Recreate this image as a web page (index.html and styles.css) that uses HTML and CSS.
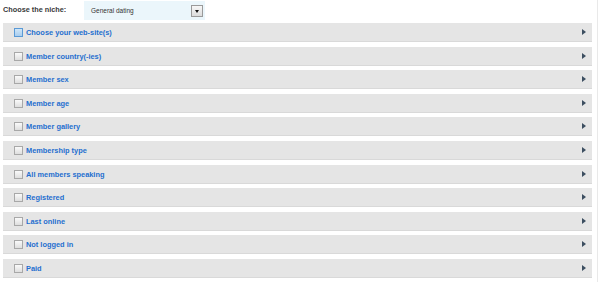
FILE: index.html
```html
<!DOCTYPE html>
<html lang="en">
<head>
    <meta charset="UTF-8">
    <title>Search</title>
    <link rel="stylesheet" href="styles.css">
</head>
<body>
<div id="search">
    <div class="niche-row">
        <label class="niche-label">Choose the niche:</label>
        <div class="niche-select">
            <span class="niche-value">General dating</span>
            <span class="niche-button"><span class="niche-arrow"></span></span>
        </div>
    </div>

    <div class="filter-list">
        <div class="filter-row">
            <span class="filter-check active"></span>
            <span class="filter-name">Choose your web-site(s)</span>
            <span class="filter-arrow"></span>
        </div>
        <div class="filter-row">
            <span class="filter-check"></span>
            <span class="filter-name">Member country(-ies)</span>
            <span class="filter-arrow"></span>
        </div>
        <div class="filter-row">
            <span class="filter-check"></span>
            <span class="filter-name">Member sex</span>
            <span class="filter-arrow"></span>
        </div>
        <div class="filter-row">
            <span class="filter-check"></span>
            <span class="filter-name">Member age</span>
            <span class="filter-arrow"></span>
        </div>
        <div class="filter-row">
            <span class="filter-check"></span>
            <span class="filter-name">Member gallery</span>
            <span class="filter-arrow"></span>
        </div>
        <div class="filter-row">
            <span class="filter-check"></span>
            <span class="filter-name">Membership type</span>
            <span class="filter-arrow"></span>
        </div>
        <div class="filter-row">
            <span class="filter-check"></span>
            <span class="filter-name">All members speaking</span>
            <span class="filter-arrow"></span>
        </div>
        <div class="filter-row">
            <span class="filter-check"></span>
            <span class="filter-name">Registered</span>
            <span class="filter-arrow"></span>
        </div>
        <div class="filter-row">
            <span class="filter-check"></span>
            <span class="filter-name">Last online</span>
            <span class="filter-arrow"></span>
        </div>
        <div class="filter-row">
            <span class="filter-check"></span>
            <span class="filter-name">Not logged in</span>
            <span class="filter-arrow"></span>
        </div>
        <div class="filter-row">
            <span class="filter-check"></span>
            <span class="filter-name">Paid</span>
            <span class="filter-arrow"></span>
        </div>
    </div>
</div>
</body>
</html>
```

FILE: styles.css
```css
body, html {
    margin: 0;
    padding: 0;
    height: 100%;
}
body {
    background: #fff;
    font-family: "Liberation Sans", Arial, sans-serif;
    color: #333;
}
#search {
    width: 594px;
    height: 282px;
    padding-left: 3px;
    border-right: 1px solid #e9e9e9;
}

/* niche select */
.niche-row {
    display: flex;
    height: 23px;
}
.niche-label {
    width: 81px;
    font-size: 7.3px;
    font-weight: bold;
    color: #3a3a3a;
    line-height: 20px;
}
.niche-select {
    display: flex;
    align-items: center;
    width: 121px;
    height: 19px;
    margin-top: 1px;
    background: #ebf6fb;
    box-sizing: border-box;
    padding: 0 2px 0 7px;
}
.niche-value {
    flex-grow: 1;
    font-size: 6.5px;
    color: #333;
}
.niche-button {
    display: flex;
    justify-content: center;
    align-items: center;
    width: 10px;
    height: 10px;
    border: 1px solid #9a9a9a;
    background: linear-gradient(#f7f7f7, #dcdcdc);
}
.niche-arrow {
    width: 0;
    height: 0;
    border-left: 2.5px solid transparent;
    border-right: 2.5px solid transparent;
    border-top: 3px solid #111;
    margin-top: 1px;
}

/* filters */
.filter-list {
    width: 589px;
}
.filter-row {
    display: flex;
    align-items: center;
    height: 18px;
    margin-bottom: 4.6px;
    padding: 0 6px 0 11px;
    background: #e5e5e5;
    border-bottom: 1px solid #d9d9d9;
}
.filter-check {
    width: 7px;
    height: 7px;
    border: 1px solid #a8a8a8;
    background: linear-gradient(#fafafa, #dedede);
    margin-right: 3px;
    margin-top: 1px;
}
.filter-check.active {
    border-color: #5a9ad6;
    background: linear-gradient(#cfe6f8, #a9cdee);
}
.filter-name {
    flex-grow: 1;
    font-size: 7.4px;
    font-weight: bold;
    color: #1f6fcf;
    padding-top: 1px;
}
.filter-arrow {
    width: 0;
    height: 0;
    border-top: 3.5px solid transparent;
    border-bottom: 3.5px solid transparent;
    border-left: 4px solid #3c4e60;
}
```
